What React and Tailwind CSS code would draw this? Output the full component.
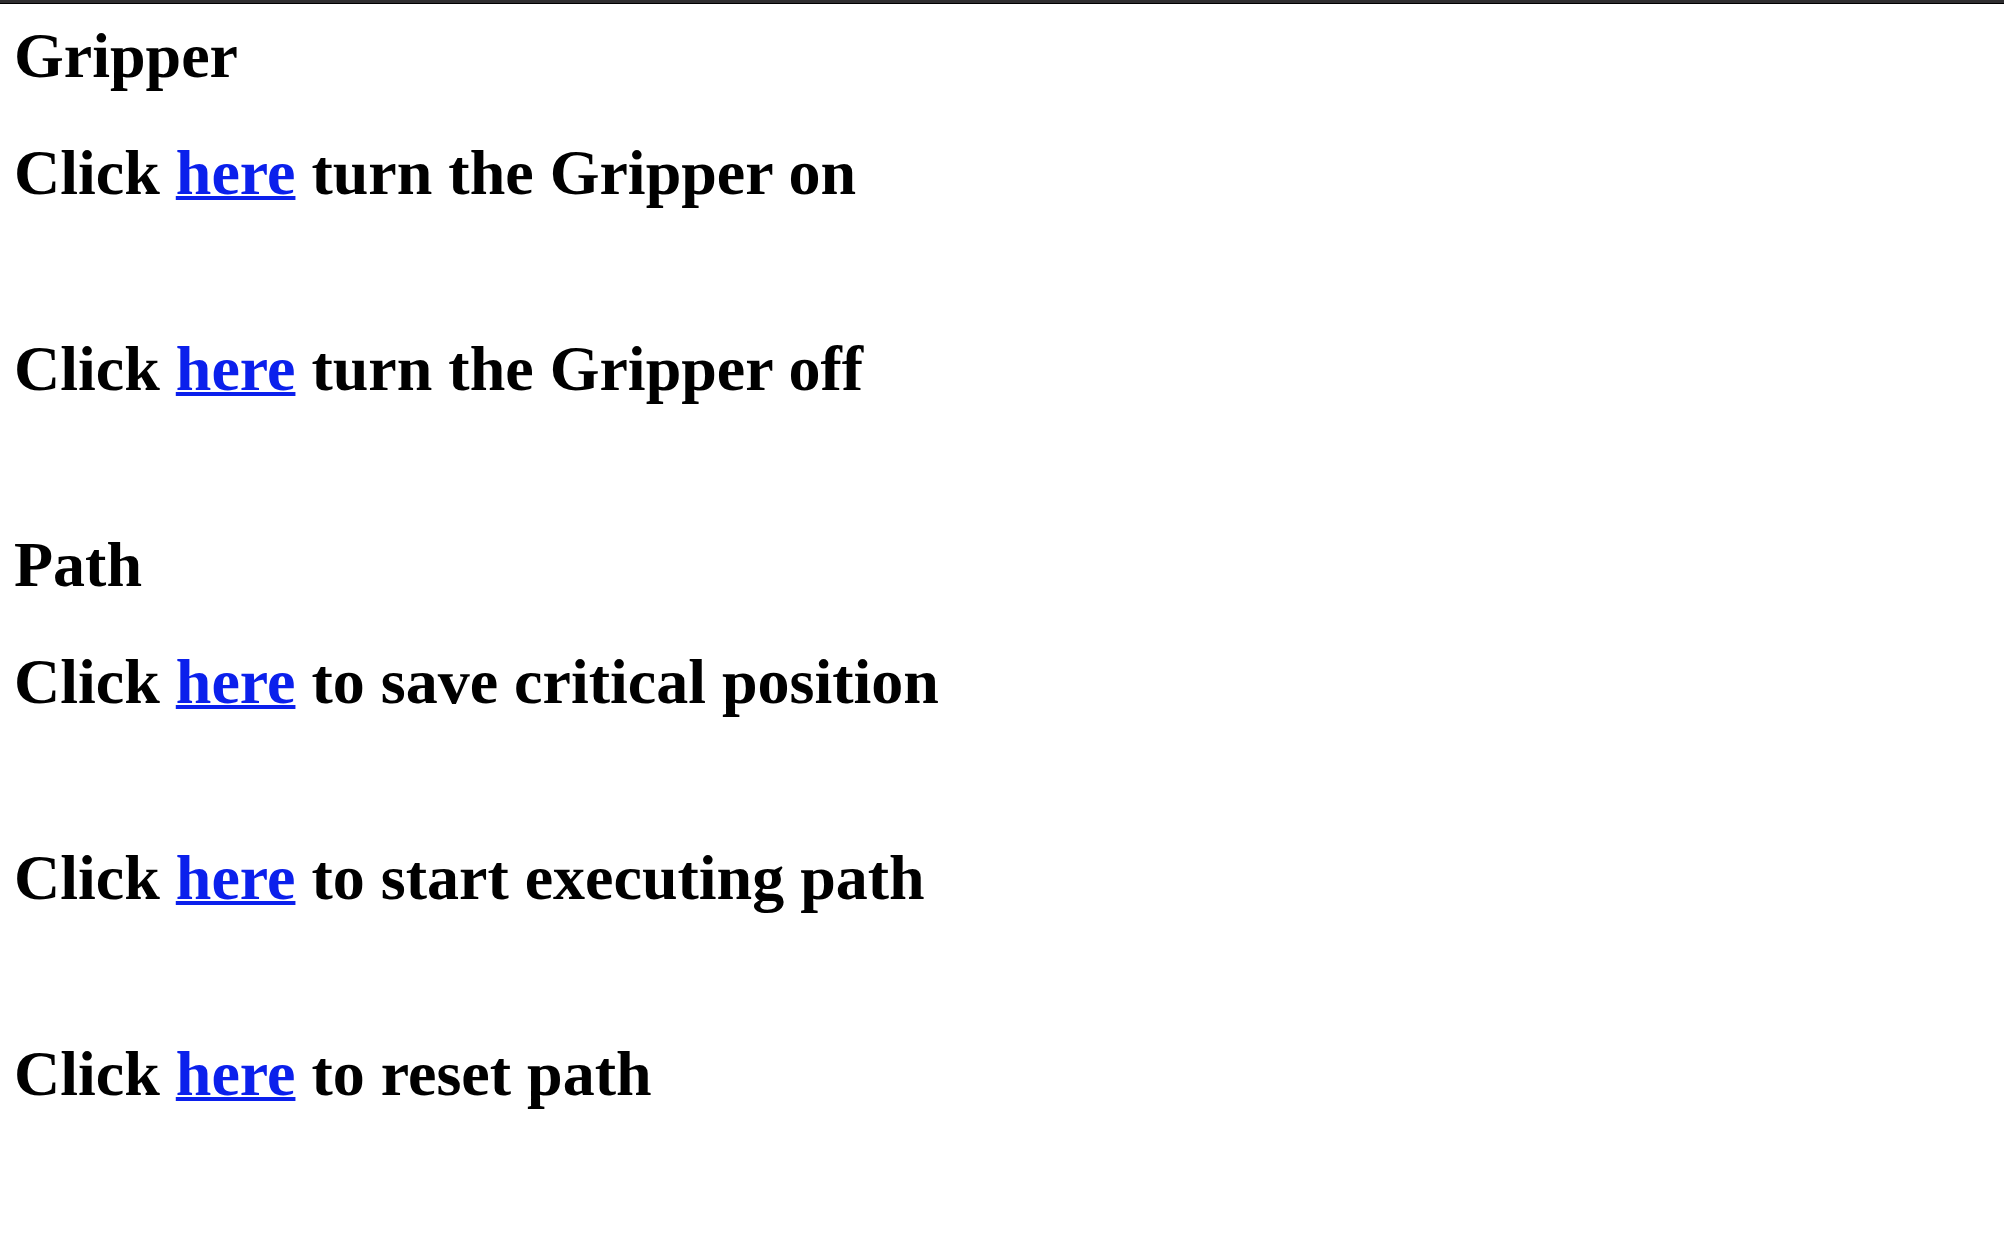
const Title = ({ children }) => (
  <h1 className="mb-[50px] text-[64px] leading-[67px] font-bold">{children}</h1>
);

const Command = ({ children }) => (
  <h1 className="mb-32 text-[64px] leading-[68px] font-bold">
    Click{" "}
    <a
      href="#"
      className="text-[#0b20ec] underline decoration-4 underline-offset-2 [text-decoration-skip-ink:none]"
    >
      here
    </a>{" "}
    {children}
  </h1>
);

export default function App() {
  return (
    <div className="min-h-screen border-t-3 border-[#2f2e30] bg-white font-['Liberation_Serif',serif] text-black">
      <main className="border-t border-black px-[14px] pt-[18px]">
        <Title>Gripper</Title>
        <Command>turn the Gripper on</Command>
        <Command>turn the Gripper off</Command>
        <Title>Path</Title>
        <Command>to save critical position</Command>
        <Command>to start executing path</Command>
        <Command>to reset path</Command>
      </main>
    </div>
  );
}
